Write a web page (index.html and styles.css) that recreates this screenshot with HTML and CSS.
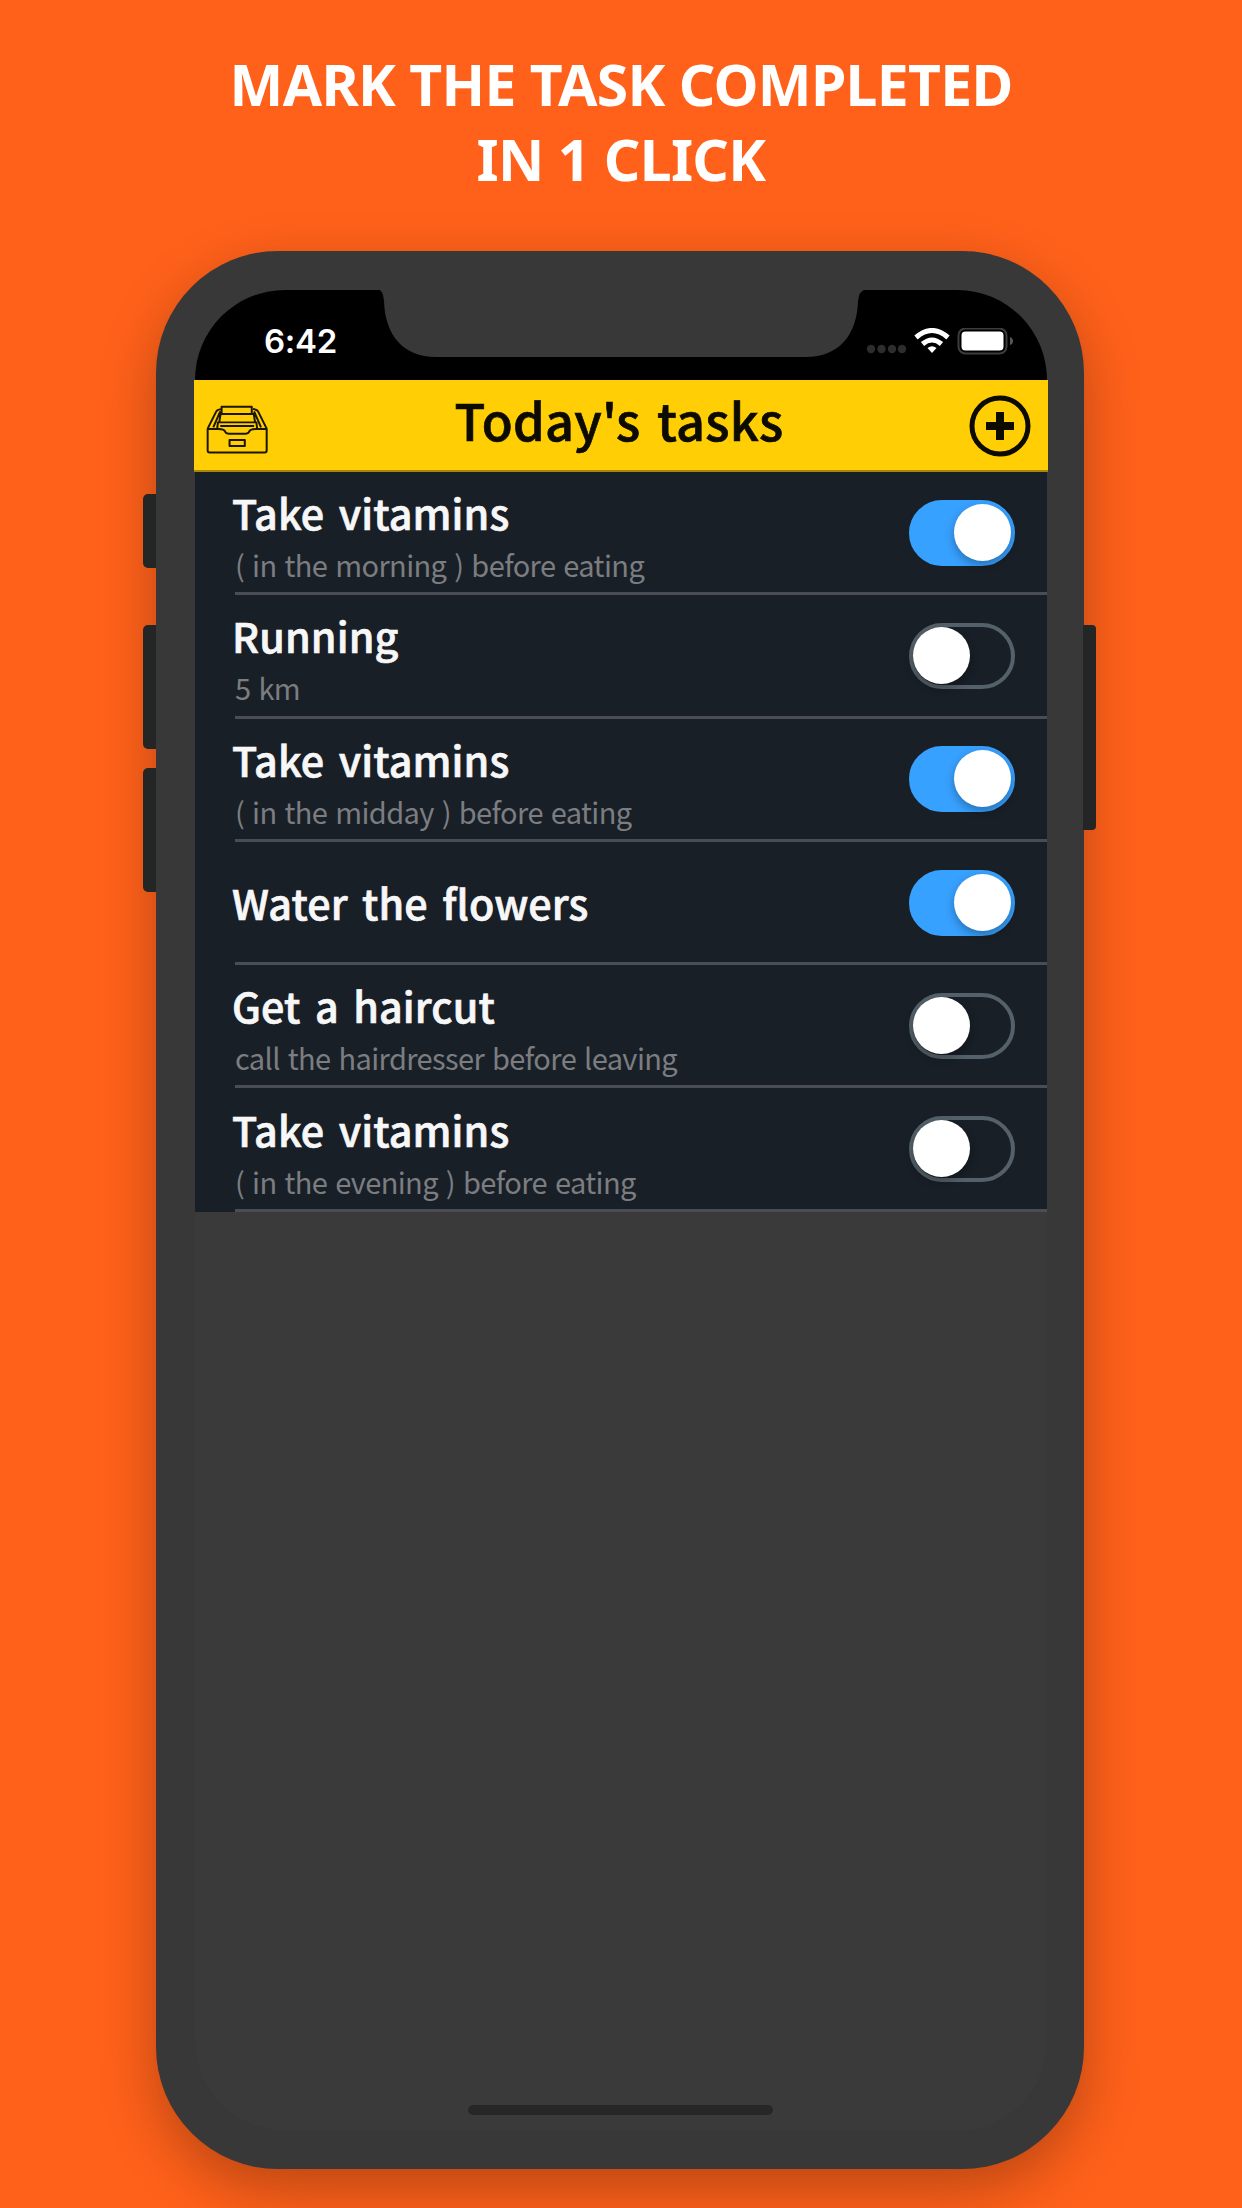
FILE: index.html
```html
<!DOCTYPE html>
<html lang="en">
<head>
<meta charset="utf-8">
<title>Today's tasks</title>
<link rel="stylesheet" href="styles.css">
</head>
<body>
<h1 class="headline">MARK THE TASK COMPLETED<br>IN 1 CLICK</h1>
<main class="phone">
  <i class="key key-mute"></i><i class="key key-up"></i><i class="key key-down"></i><i class="key key-power"></i>
  <div class="screen">
    <div class="status">
      <svg class="notch" viewBox="0 0 492 69"><path d="M0 0H1Q6 1 7 12C8 46 26 68 59 68H429C462 68 480 46 481 12Q482 1 490 0Z"/></svg>
      <span class="time">6:42</span>
      <svg class="signals" viewBox="0 0 150 30">
        <g fill="#2d2d2d"><circle cx="5" cy="21" r="4.2"/><circle cx="15.5" cy="21" r="4.2"/><circle cx="26" cy="21" r="4.2"/><circle cx="36" cy="21" r="4.2"/></g>
        <g fill="none" stroke="#fff" stroke-width="5"><path d="M50 9.500Q66 -4.500 82 9.500"/><path d="M56.500 16Q66 8 75.500 16"/></g>
        <path fill="#fff" d="M61.500 20Q66 16.500 70.500 20L66 25Z"/>
        <rect x="92.500" y=".5" width="48" height="25" rx="7" fill="none" stroke="#3d3d3d" stroke-width="2"/>
        <rect x="95.500" y="3.500" width="42" height="19" rx="4" fill="#fff"/>
        <path fill="#555" d="M144 9Q147 10 147 13T144 17Z"/>
      </svg>
    </div>
    <header class="bar">
      <svg class="archive" viewBox="50 42 190 153" fill="none" stroke="#1b1600" stroke-width="6" stroke-linejoin="round">
        <path d="M55 117H88Q106 117 108 126Q110 131 118 131H170Q178 131 180 126Q182 117 200 117H233V182Q233 188 227 188H61Q55 188 55 182Z"/>
        <path d="M55 116L81 64Q83 59 95 57M233 116L207 64Q205 59 192 57M72 112L93 64M216 112L195 64M97 72V50H188V72M92 72H196M94 72L90 96M194 72L198 96M84 114L86 97H202L204 114M93 108H195"/>
        <rect x="121" y="150" width="46" height="18"/>
      </svg>
      <h2 class="title">Today's tasks</h2>
      <svg class="add" viewBox="0 0 62 62" fill="none" stroke="#0d0b00"><circle cx="31" cy="31" r="28" stroke-width="5"/><path d="M31 17V45M17 31H45" stroke-width="8"/></svg>
    </header>
    <ul class="tasks">
      <li class="task"><div class="text"><span class="name">Take vitamins</span><span class="note">( in the morning ) before eating</span></div><span class="toggle on"></span></li>
      <li class="task"><div class="text"><span class="name">Running</span><span class="note">5 km</span></div><span class="toggle"></span></li>
      <li class="task"><div class="text"><span class="name">Take vitamins</span><span class="note">( in the midday ) before eating</span></div><span class="toggle on"></span></li>
      <li class="task"><div class="text"><span class="name">Water the flowers</span></div><span class="toggle on"></span></li>
      <li class="task"><div class="text"><span class="name">Get a haircut</span><span class="note">call the hairdresser before leaving</span></div><span class="toggle"></span></li>
      <li class="task"><div class="text"><span class="name">Take vitamins</span><span class="note">( in the evening ) before eating</span></div><span class="toggle"></span></li>
    </ul>
    <div class="home"></div>
  </div>
</main>
</body>
</html>
```
FILE: styles.css
```css
* { box-sizing: border-box; margin: 0; padding: 0; }
body { width: 1242px; height: 2208px; overflow: hidden; background: #ff611a; font-family: "Noto Sans CJK JP", "Noto Sans", sans-serif; display: flex; flex-direction: column; align-items: center; }
.headline { height: 251px; padding-top: 47px; font-family: "Noto Sans", sans-serif; font-size: 57px; line-height: 75px; font-weight: 700; letter-spacing: -.7px; color: #fff; text-align: center; white-space: nowrap; }
.phone { position: relative; width: 928px; height: 1918px; margin-left: -2px; padding: 39px; border-radius: 122px; background: #383838; box-shadow: 0 20px 56px rgba(0, 0, 0, .27); }
.key { position: absolute; width: 13px; background: #242625; }
.key-mute, .key-up, .key-down { left: -13px; border-radius: 5px 0 0 5px; }
.key-mute { top: 243px; height: 74px; }
.key-up { top: 374px; height: 124px; }
.key-down { top: 517px; height: 124px; }
.key-power { right: -12px; top: 374px; height: 205px; border-radius: 0 4px 4px 0; }
.screen { display: flex; flex-direction: column; width: 852px; height: 1841px; border-radius: 90px; background: #3a3a3a; }
.status { position: relative; flex: none; display: flex; justify-content: space-between; height: 90px; padding: 38px 31px 0 69px; background: #000; border-radius: 90px 90px 0 0; }
.notch { position: absolute; left: 182px; top: -1px; width: 492px; height: 69px; fill: #383838; }
.time { color: #fff; font: 600 33px/26px Inter, sans-serif; letter-spacing: -.3px; }
.signals { width: 150px; height: 30px; }
.bar { flex: none; display: flex; align-items: center; justify-content: space-between; height: 92px; margin: 0 -1px; padding: 0 17px 0 12px; background: #ffce04; border-bottom: 2px solid #a88609; }
.archive { width: 63px; height: 51px; margin-top: 9px; }
.title { margin-top: -12px; font-size: 50.500px; line-height: 80px; font-weight: 500; letter-spacing: .2px; word-spacing: 5px; color: #0d0b00; -webkit-text-stroke: .7px; white-space: nowrap; }
.add { width: 62px; height: 62px; margin-top: 1px; }
.tasks { list-style: none; flex: none; background: #191f27; }
.task { display: flex; align-items: center; justify-content: space-between; height: 123.300px; padding: 0 32px 0 37px; background: linear-gradient(#4a4d56, #4a4d56) 40px 100% / 100% 3px no-repeat; }
.text { display: flex; flex-direction: column; gap: 9px; padding-top: 2px; white-space: nowrap; }
.name { font-size: 41.300px; line-height: 50px; font-weight: 500; letter-spacing: .1px; word-spacing: 5px; color: #f7f7f8; -webkit-text-stroke: .7px; }
.name:only-child { margin-top: -5px; }
.note { margin-left: 3px; font-size: 29px; line-height: 36px; letter-spacing: -.6px; word-spacing: 2px; color: #7b7d80; }
.toggle { display: flex; width: 106px; height: 66px; margin-top: -2px; border: 4px solid #54616a; border-radius: 33px; }
.toggle::before { content: ""; width: 57px; height: 57px; border-radius: 50%; background: #fff; box-shadow: 0 4px 10px rgba(0, 0, 0, .3); }
.toggle.on { background: #37a1ff; border-color: #37a1ff; justify-content: flex-end; }
.home { width: 305px; height: 10px; margin: auto auto 16px 273px; border-radius: 5px; background: #272727; }
```
